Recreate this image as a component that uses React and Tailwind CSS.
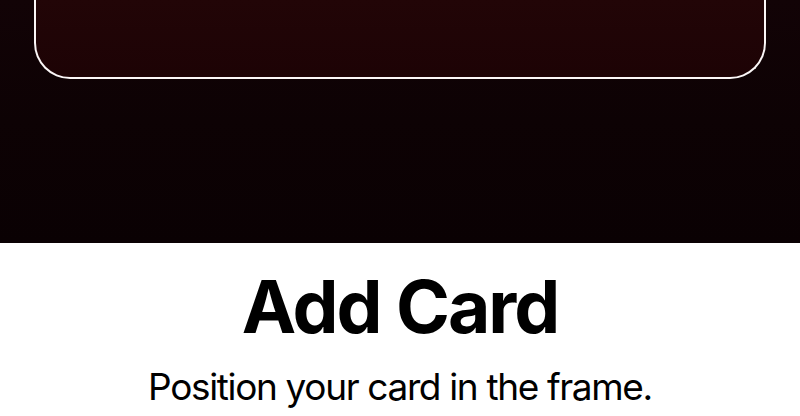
export default function App() {
    return (
        <div className="w-[800px] h-[416px] overflow-hidden bg-white flex flex-col" style={{ fontFamily: "Inter, 'Noto Sans', sans-serif" }}>
            {/* Camera view */}
            <div className="h-[243px] shrink-0 bg-gradient-to-b from-[#120306] via-[#0d0204] to-[#0a0103] px-[34px]">
                {/* Card frame */}
                <div className="h-[79px] border-2 border-t-0 border-[#fbf7f7] rounded-b-[36px] bg-gradient-to-b from-[#220507] to-[#1d0305]"></div>
            </div>

            {/* Caption */}
            <div className="flex flex-col items-center text-black">
                <h1 className="mt-[27px] text-[73px] leading-none font-bold tracking-[-2px]">Add Card</h1>
                <p className="mt-[25px] text-[37px] leading-none tracking-[-1.35px]">Position your card in the frame.</p>
            </div>
        </div>
    );
}
